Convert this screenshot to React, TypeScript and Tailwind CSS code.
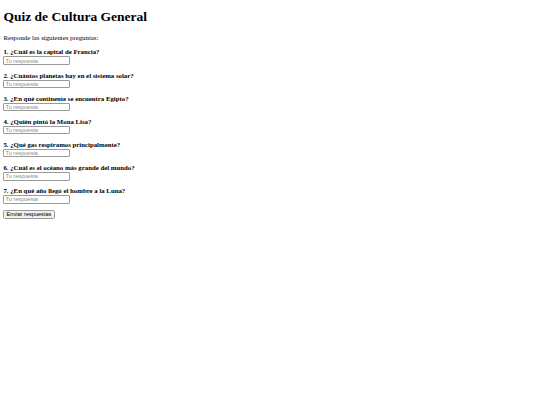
const questions = [
  '¿Cuál es la capital de Francia?',
  '¿Cuántos planetas hay en el sistema solar?',
  '¿En qué continente se encuentra Egipto?',
  '¿Quién pintó la Mona Lisa?',
  '¿Qué gas respiramos principalmente?',
  '¿Cuál es el océano más grande del mundo?',
  '¿En qué año llegó el hombre a la Luna?',
];

export default function App() {
  return (
    <div className="min-h-[405px] bg-white px-[3.4px] pt-[3px] text-black font-['Liberation_Serif',serif]">
      <h1 className="mt-[5.7px] mb-[9.3px] text-[13.5px] leading-[16px] font-bold">Quiz de Cultura General</h1>
      <p className="mb-[6.5px] text-[6.8px] leading-[8px]">Responde las siguientes preguntas:</p>
      <form onSubmit={(e) => e.preventDefault()}>
        {questions.map((q, i) => (
          <div key={i} className="mb-[6.5px]">
            <label className="block text-[6.8px] leading-[8px] font-bold">
              {i + 1}. {q}
            </label>
            <input
              type="text"
              placeholder="Tu respuesta"
              className="block -ml-[0.4px] w-[66.5px] h-[8.6px] px-[1.5px] border-[0.8px] border-[#9a9a9a] rounded-[1px] text-[5.6px] font-['Liberation_Sans',sans-serif] placeholder:text-[#8a8a8a] outline-none"
            />
          </div>
        ))}
        <button
          type="submit"
          className="block -ml-[0.4px] h-[8.5px] w-[52px] border-[0.8px] border-[#9a9a9a] rounded-[1.5px] bg-[#efefef] text-[5.6px] leading-[7px] font-['Liberation_Sans',sans-serif]"
        >
          Enviar respuestas
        </button>
      </form>
    </div>
  );
}
